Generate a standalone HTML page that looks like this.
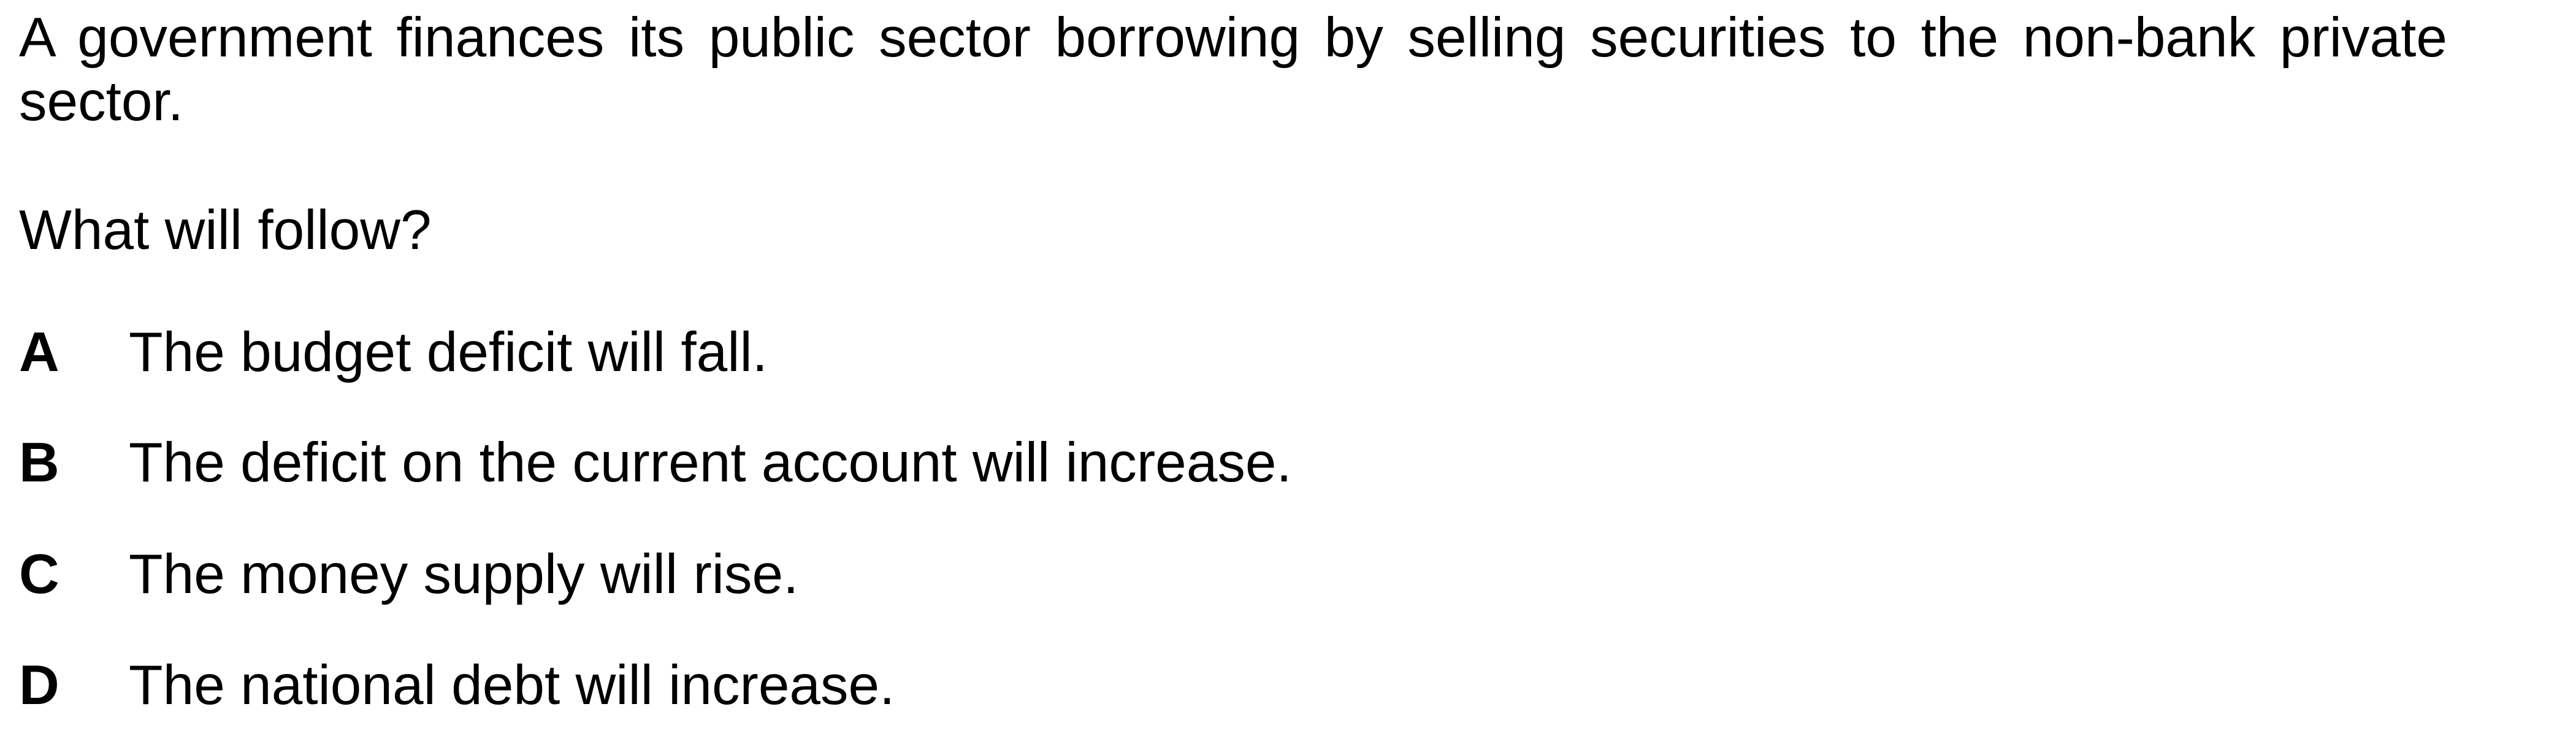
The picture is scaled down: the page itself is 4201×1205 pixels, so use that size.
<!DOCTYPE html>
<html><head><meta charset="utf-8"><style>
html,body{margin:0;padding:0;background:#fff;}
body{width:4201px;height:1205px;position:relative;overflow:hidden;font-family:"Liberation Sans",Arial,sans-serif;font-size:91px;line-height:104px;color:#000;}
.p{position:absolute;left:31px;}
.j{width:3960px;text-align:justify;text-align-last:left;}
.o{position:absolute;left:31px;white-space:nowrap;}
.o b{display:inline-block;width:179px;}
</style></head><body>
<div class="p j" style="top:10px">A government finances its public sector borrowing by selling securities to the non-bank private sector.</div>
<div class="p" style="top:324px">What will follow?</div>
<div class="o" style="top:523px"><b>A</b>The budget deficit will fall.</div>
<div class="o" style="top:703px"><b>B</b>The deficit on the current account will increase.</div>
<div class="o" style="top:885px"><b>C</b>The money supply will rise.</div>
<div class="o" style="top:1066px"><b>D</b>The national debt will increase.</div>
</body></html>
